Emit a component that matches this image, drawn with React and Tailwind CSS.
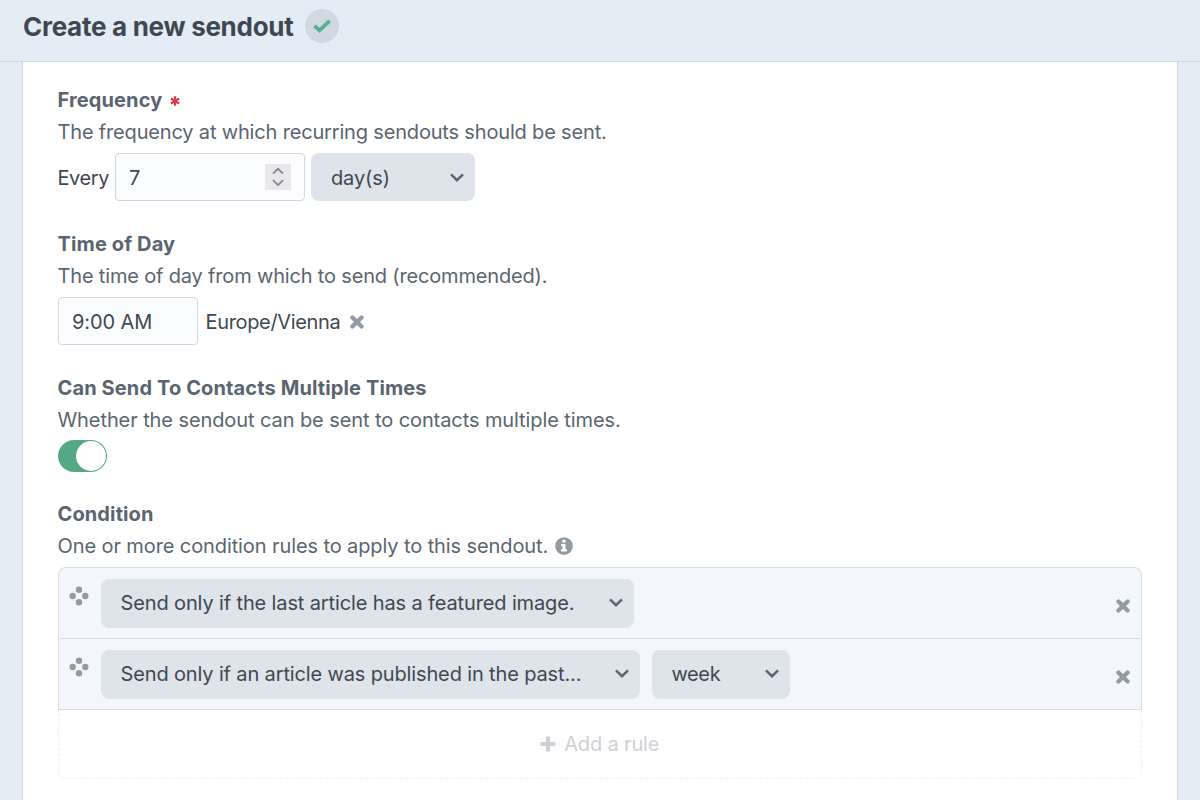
import React, { useState } from 'react';

const Chevron = () => (
    <svg width="14" height="10" viewBox="0 0 14 10" fill="none" stroke="#5b6571" strokeWidth="2.5">
        <path d="M1 1.4 L7 7.2 L13 1.4" />
    </svg>
);

const RemoveIcon = () => (
    <svg width="14" height="14" viewBox="0 0 14 14" stroke="#929ba5" strokeWidth="4.2" strokeLinecap="round">
        <path d="M2.4 2.4 L11.6 11.6 M11.6 2.4 L2.4 11.6" />
    </svg>
);

const MoveIcon = () => (
    <svg width="20" height="20" viewBox="0 0 20 20" fill="#959ba2">
        <circle cx="10" cy="3.7" r="3.2" />
        <circle cx="3.7" cy="10" r="3.2" />
        <circle cx="16.3" cy="10" r="3.2" />
        <circle cx="10" cy="16.3" r="3.2" />
    </svg>
);

const InfoIcon = () => (
    <svg width="18" height="18" viewBox="0 0 18 18">
        <circle cx="9" cy="9" r="8.8" fill="#929aa3" />
        <path d="M7.3 2.8 h3.2 v2.6 h-3.2 z M6 7 h4.5 v5.2 h1.4 v2.2 H6 v-2.2 h1.4 V9.1 H6 z" fill="#fff" />
    </svg>
);

const SelectButton = ({ label, className = '', textClass = 'tracking-[-0.13px]' }) => (
    <button className={`flex items-center justify-between rounded-lg bg-[#dfe3ea] pl-5 pr-[11px] text-[#3f4852] ${className}`}>
        <span className={`whitespace-nowrap ${textClass}`}>{label}</span>
        <Chevron />
    </button>
);

const Field = ({ label, required, text, textClass = '', info, className = '', children }) => (
    <div className={className}>
        <div className="flex h-8 items-center font-bold text-[#5a6570]">
            <span className="whitespace-nowrap tracking-[0.12px]">{label}</span>
            {required && (
                <svg className="ml-[7.5px] mt-0.5" width="10" height="10" viewBox="0 0 10 10" stroke="#cf3f4c" strokeWidth="2.3">
                    <path d="M5 0.3 V9.7 M0.9 2.6 L9.1 7.4 M9.1 2.6 L0.9 7.4" />
                </svg>
            )}
        </div>
        <div className="flex h-8 items-center gap-[7px] text-[#5a6570]">
            <span className={`whitespace-nowrap ${textClass}`}>{text}</span>
            {info && <InfoIcon />}
        </div>
        {children}
    </div>
);

const Rule = ({ children }) => (
    <div className="flex h-[71px] items-center border-b border-[#d9dee6] pl-[10px] pr-[11px]">
        <div className="mr-3 -mt-[15px]"><MoveIcon /></div>
        <div className="flex gap-3">{children}</div>
        <button className="ml-auto mt-1.5"><RemoveIcon /></button>
    </div>
);

const App = () => {
    const [multiple, setMultiple] = useState(true);

    return (
        <div className="flex h-screen flex-col overflow-hidden bg-[#e4edf5] font-['Inter','Liberation_Sans',sans-serif] text-[20px] leading-8 text-[#3f4852]">
            <header className="flex h-[62px] shrink-0 items-start border-b border-[#d2dae3] pl-[23px]">
                <h1 className="mt-[11px] whitespace-nowrap text-[26px] font-bold leading-8 tracking-[-0.28px]">Create a new sendout</h1>
                <div className="ml-3 mt-[9px] flex size-[34px] items-center justify-center rounded-full bg-[#d0d8e4]">
                    <svg width="18" height="14" viewBox="0 0 18 14" fill="none" stroke="#58b091" strokeWidth="3.8">
                        <path d="M1.4 6.8 L6.6 11.4 L16.6 1.8" />
                    </svg>
                </div>
            </header>

            <main className="mx-[22px] flex-1 border-x border-[#cdd6e0] bg-white pl-[34.5px] pr-[35px] pt-[22px]">
                <Field
                    label="Frequency"
                    required
                    text="The frequency at which recurring sendouts should be sent."
                    textClass="tracking-[-0.17px]"
                    className="h-[144px]"
                >
                    <div className="mt-[5px] flex h-[48px] items-center">
                        <span className="w-[57.5px] pt-px tracking-[-0.4px]">Every</span>
                        <div className="flex h-[48px] w-[190px] items-center justify-between rounded-[4px] border border-[#cfd7e1] bg-[#fbfcfe] px-[13px]">
                            <span className="pt-px">7</span>
                            <span className="flex size-[26px] items-center justify-center bg-[#e8e8eb]">
                                <svg width="12" height="20" viewBox="0 0 12 20" fill="none" stroke="#818489" strokeWidth="1.7">
                                    <path d="M1 6.6 L6 1.8 L11 6.6 M1 13.2 L6 18 L11 13.2" />
                                </svg>
                            </span>
                        </div>
                        <SelectButton label="day(s)" className="ml-[6px] h-[48px] w-[163.5px] pt-px" />
                    </div>
                </Field>

                <Field
                    label="Time of Day"
                    text="The time of day from which to send (recommended)."
                    textClass="tracking-[-0.17px]"
                    className="h-[144px]"
                >
                    <div className="mt-[5px] flex h-[48px] items-center">
                        <div className="flex h-[48px] w-[140.5px] items-center rounded-[4px] border border-[#cfd7e1] bg-[#fbfcfe] pl-[13.5px] pt-px tracking-[-0.1px]">9:00 AM</div>
                        <span className="ml-[7.5px] mr-[10px] pt-px tracking-[-0.34px]">Europe/Vienna</span>
                        <button className="pt-px"><RemoveIcon /></button>
                    </div>
                </Field>

                <Field
                    label="Can Send To Contacts Multiple Times"
                    text="Whether the sendout can be sent to contacts multiple times."
                    textClass="tracking-[-0.09px]"
                    className="h-[126px]"
                >
                    <button
                        onClick={() => setMultiple(!multiple)}
                        className={`mt-1 flex h-8 w-[49px] items-center rounded-full p-px ${multiple ? 'justify-end bg-[#55a885]' : 'justify-start bg-[#9aa5b1]'}`}
                    >
                        <span className="size-[30px] rounded-full bg-white" />
                    </button>
                </Field>

                <Field
                    label="Condition"
                    text="One or more condition rules to apply to this sendout."
                    textClass="tracking-[-0.1px]"
                    info
                >
                    <div className="mt-[5px] rounded-t-lg border border-b-0 border-[#d9dee6] bg-[#f3f7fc]">
                        <Rule>
                            <SelectButton label="Send only if the last article has a featured image." className="h-[49px] w-[533px]" />
                        </Rule>
                        <Rule>
                            <SelectButton label="Send only if an article was published in the past..." className="h-[49px] w-[539px]" textClass="tracking-[-0.14px]" />
                            <SelectButton label="week" className="h-[49px] w-[138px]" textClass="tracking-[-0.4px]" />
                        </Rule>
                    </div>
                    <button className="flex h-[69px] w-full items-center justify-center gap-2 rounded-b-lg border border-t-0 border-dashed border-[#eef0f3] tracking-[-0.15px] text-[#cdd1d5]">
                        <svg width="16" height="16" viewBox="0 0 16 16" stroke="#cdd1d5" strokeWidth="4">
                            <path d="M8 0.5 V15.5 M0.5 8 H15.5" />
                        </svg>
                        Add a rule
                    </button>
                </Field>
            </main>
        </div>
    );
};

export default App;
